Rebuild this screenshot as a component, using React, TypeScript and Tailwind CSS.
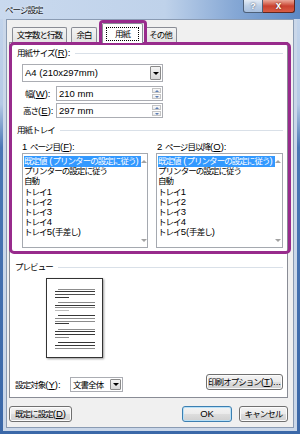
import React from 'react';

// CJK runs get the smaller, tighter size; latin stays at the base size
const CJK = /([\u3000-\u30ff\u4e00-\u9fff\uff00-\uffef]+)/;

function T({ s }: { s: string }) {
    return (
        <>
            {s.split(CJK).map((p, i) =>
                i % 2 === 1 ? (
                    <span key={i} className="text-[8.5px] tracking-[-0.95px]">{p}</span>
                ) : (
                    p
                )
            )}
        </>
    );
}

function Acc({ pre, k, post = '):' }: { pre: string; k: string; post?: string }) {
    return (
        <span className="whitespace-nowrap">
            <T s={pre} />
            <span className="underline underline-offset-1">{k}</span>
            {post}
        </span>
    );
}

function Sep({ children, cls }: { children: React.ReactNode; cls: string }) {
    return (
        <div className={`flex items-center h-[10px] leading-[10px] pr-[4px] ${cls}`}>
            {children}
            <div className="flex-1 h-px bg-[#d9e0e8] ml-[5px]" />
        </div>
    );
}

function Tri({ cls }: { cls: string }) {
    return <div className={`w-0 h-0 border-x-[3px] border-x-transparent ${cls}`} />;
}

function DropBtn() {
    return (
        <div className="w-[11px] self-stretch m-px border border-[#8a8a8a] rounded-[1px] bg-gradient-to-b from-[#f4f4f4] to-[#d8d8d8] flex items-center justify-center">
            <Tri cls="border-t-[3px] border-t-black" />
        </div>
    );
}

function Spin() {
    return (
        <div className="w-[11px] flex flex-col gap-px p-px">
            <div className="flex-1 border border-[#c4c4c4] bg-gradient-to-b from-[#fbfbfb] to-[#e9e9e9] flex items-center justify-center">
                <div className="w-0 h-0 border-x-[2.5px] border-x-transparent border-b-[2.5px] border-b-[#5b7db4]" />
            </div>
            <div className="flex-1 border border-[#c4c4c4] bg-gradient-to-b from-[#fbfbfb] to-[#e9e9e9] flex items-center justify-center">
                <div className="w-0 h-0 border-x-[2.5px] border-x-transparent border-t-[2.5px] border-t-[#5b7db4]" />
            </div>
        </div>
    );
}

const trays = [
    '既定値 (プリンターの設定に従う)',
    'プリンターの設定に従う',
    '自動',
    'トレイ1',
    'トレイ2',
    'トレイ3',
    'トレイ4',
    'トレイ5(手差し)',
];

function ListBox({ cls }: { cls: string }) {
    return (
        <div className={`h-[95px] border border-[#a5a9b0] bg-white flex ${cls}`}>
            <div className="flex-1 pt-[2px] pl-px">
                {trays.map((t, i) => (
                    <div key={t} className="h-[10.2px] leading-[10.2px] whitespace-nowrap">
                        <span className={i === 0 ? 'inline-block bg-[#3399ff] text-white pr-[2px] leading-[9.6px]' : ''}>
                            <T s={t} />
                        </span>
                    </div>
                ))}
            </div>
            <div className="w-[12px] flex flex-col justify-between items-center pt-[6px] pb-[5px]">
                <Tri cls="border-b-[3px] border-b-[#a2a2a2]" />
                <Tri cls="border-t-[3px] border-t-[#a2a2a2]" />
            </div>
        </div>
    );
}

const paras = [
    ['ml-[3px] w-[37px] bg-[#8c8c8c]', 'w-[40px] bg-[#383838]', 'w-[40px] bg-[#505050]', 'w-[14px] bg-[#383838]'],
    ['ml-[3px] w-[37px] bg-[#8c8c8c]', 'w-[40px] bg-[#383838]', 'w-[40px] bg-[#8c8c8c]', 'w-[14px] bg-[#bdbdbd]'],
    ['ml-[3px] w-[37px] bg-[#383838]', 'w-[40px] bg-[#8c8c8c]', 'w-[40px] bg-[#8c8c8c]', 'w-[14px] bg-[#383838]'],
    ['ml-[3px] w-[37px] bg-[#8c8c8c]', 'w-[40px] bg-[#383838]', 'w-[40px] bg-[#383838]', 'w-[14px] bg-[#8c8c8c]'],
    ['ml-[3px] w-[37px] bg-[#383838]', 'w-[40px] bg-[#383838]', 'w-[40px] bg-[#8c8c8c]'],
];

function Btn({ children, cls, def = false }: { children: React.ReactNode; cls: string; def?: boolean }) {
    return (
        <div
            className={`h-[16px] rounded-[3px] border flex items-center justify-center leading-[14px] bg-[linear-gradient(180deg,#f3f3f3_0%,#ebebeb_48%,#dddddd_52%,#cfcfcf_100%)] ${
                def ? 'border-[#3c7fb1] shadow-[inset_0_0_0_1px_#b8e0f7]' : 'border-[#707070] shadow-[inset_0_0_0_1px_#fbfbfb]'
            } ${cls}`}
        >
            {children}
        </div>
    );
}

export default function App() {
    return (
        <div className="relative w-[300px] h-[434px] flex flex-col overflow-hidden bg-[linear-gradient(180deg,#c5d6ec_0%,#b4c9e5_24%,#4a76b4_34%,#3b68a8_100%)] font-['Liberation_Sans','Noto_Sans_CJK_JP',sans-serif] text-[9.5px] text-black">
            {/* title bar */}
            <div className="h-[19px] flex items-start bg-[linear-gradient(90deg,#c9d9ee_0%,#bfd2ea_55%,#86a8d5_78%,#5b88c4_100%)]">
                <div className="pl-[5px] pt-[4px] leading-[11px] text-[#1b1b1b] [text-shadow:0_0_3px_#fff]">
                    <T s="ページ設定" />
                </div>
                <div className="ml-auto mr-[5px] flex h-[13px]">
                    <div className="w-[20px] border border-[#4d6079] border-t-0 rounded-bl-[3px] bg-gradient-to-b from-[#e4ecf6] via-[#bccfe6] to-[#a9c0df] flex items-center justify-center text-[9px] font-bold leading-none text-white [text-shadow:0_0_2px_#2d3e55]">
                        ?
                    </div>
                    <div className="w-[32px] border border-[#5e2620] border-t-0 border-l-0 rounded-br-[3px] bg-gradient-to-b from-[#e9a99b] via-[#c9402f] to-[#d85d45] flex items-center justify-center text-[10px] font-bold leading-none text-white [text-shadow:0_0_2px_#4a140e]">
                        x
                    </div>
                </div>
            </div>

            <div className="flex-1 flex px-[3px] pb-[3px]">
                <div className="flex-1 flex px-[3px] pb-[3px] bg-[#cad7e9]">
                    <div className="flex-1 flex flex-col bg-[#f0f0f0] border border-[#8a9bb3]">
                        {/* tabs */}
                        <div className="h-[22px] flex items-end pl-[5px]">
                            <div className="w-[55px] h-[15px] border border-b-0 border-[#898c95] rounded-t-[2px] bg-gradient-to-b from-[#f4f4f4] to-[#e2e2e2] flex items-center justify-center leading-[12px]">
                                <T s="文字数と行数" />
                            </div>
                            <div className="ml-[4px] w-[26px] h-[15px] border border-b-0 border-[#898c95] rounded-t-[2px] bg-gradient-to-b from-[#f4f4f4] to-[#e2e2e2] flex items-center justify-center leading-[12px]">
                                <T s="余白" />
                            </div>
                            <div className="relative z-10 ml-[5px] w-[41px] h-[20px] -mb-px border border-b-0 border-[#898c95] rounded-t-[2px] bg-white px-[3px] pt-[3px] pb-[2px]">
                                <div className="h-full border border-dotted border-black flex items-center justify-center leading-[12px]">
                                    <T s="用紙" />
                                </div>
                            </div>
                            <div className="ml-[1px] w-[33px] h-[15px] border border-b-0 border-[#898c95] rounded-t-[2px] bg-gradient-to-b from-[#f4f4f4] to-[#e2e2e2] flex items-center justify-center leading-[12px]">
                                <T s="その他" />
                            </div>
                        </div>

                        {/* tab page */}
                        <div className="ml-[2px] w-[279px] h-[356px] bg-white border border-[#898c95] flex flex-col">
                            <Sep cls="mt-[5px] pl-[7px]">
                                <Acc pre="用紙サイズ(" k="R" />
                            </Sep>
                            <div className="mt-[6px] ml-[12px] w-[141px] h-[18px] border border-[#abadb3] bg-white flex">
                                <div className="flex-1 pl-[2px] leading-[16px]">A4 (210x297mm)</div>
                                <DropBtn />
                            </div>
                            <div className="mt-[4px] h-[15px] flex items-center">
                                <div className="w-[46px] pl-[15px] leading-[10px]">
                                    <Acc pre="幅(" k="W" />
                                </div>
                                <div className="w-[107px] h-[15px] border border-[#abadb3] bg-white flex">
                                    <div className="flex-1 pl-[2px] leading-[13px]">210 mm</div>
                                    <Spin />
                                </div>
                            </div>
                            <div className="mt-[2px] h-[15px] flex items-center">
                                <div className="w-[46px] pl-[13px] leading-[10px]">
                                    <Acc pre="高さ(" k="E" />
                                </div>
                                <div className="w-[107px] h-[15px] border border-[#abadb3] bg-white flex">
                                    <div className="flex-1 pl-[2px] leading-[13px]">297 mm</div>
                                    <Spin />
                                </div>
                            </div>

                            <Sep cls="mt-[7px] pl-[7px]">
                                <T s="用紙トレイ" />
                            </Sep>
                            <div className="mt-[7px] h-[10px] leading-[10px] flex">
                                <div className="ml-[12px] w-[135px]">
                                    <Acc pre="1 ページ目(" k="F" />
                                </div>
                                <div>
                                    <Acc pre="2 ページ目以降(" k="O" />
                                </div>
                            </div>
                            <div className="mt-[1px] flex">
                                <ListBox cls="ml-[12px] w-[126px]" />
                                <ListBox cls="ml-[8px] w-[127px]" />
                            </div>

                            <Sep cls="mt-[14px] pl-[5px]">
                                <T s="プレビュー" />
                            </Sep>
                            <div className="mt-[6px] ml-[36px] w-[57px] h-[80px] border border-[#333] bg-white shadow-[1px_1px_2px_rgba(0,0,0,0.4)] pl-[7.7px] pt-[9.7px] flex flex-col gap-[4.3px]">
                                {paras.map((p, i) => (
                                    <div key={i} className="flex flex-col gap-[1.7px]">
                                        {p.map((c, j) => (
                                            <div key={j} className={`h-px ${c}`} />
                                        ))}
                                    </div>
                                ))}
                            </div>

                            <div className="mt-[16px] h-[18px] flex">
                                <div className="w-[60px] pl-[5px] self-end h-[15px] leading-[15px]">
                                    <Acc pre="設定対象(" k="Y" />
                                </div>
                                <div className="self-end w-[53px] h-[15px] border border-[#abadb3] bg-white flex">
                                    <div className="flex-1 pl-[2px] leading-[13px]">
                                        <T s="文書全体" />
                                    </div>
                                    <DropBtn />
                                </div>
                                <Btn cls="ml-auto mr-[4px] w-[77px] self-start">
                                    <Acc pre="印刷オプション(" k="T" post=")..." />
                                </Btn>
                            </div>
                        </div>

                        {/* dialog buttons */}
                        <div className="mt-[8px] flex">
                            <Btn cls="ml-[2px] w-[63px]">
                                <Acc pre="既定に設定(" k="D" post=")" />
                            </Btn>
                            <Btn cls="ml-auto w-[50px]" def>
                                OK
                            </Btn>
                            <Btn cls="ml-[7px] mr-[5px] w-[49px]">
                                <T s="キャンセル" />
                            </Btn>
                        </div>
                    </div>
                </div>
            </div>

            {/* purple highlight annotations */}
            <div className="absolute left-[99px] top-[20px] w-[48px] h-[25px] border-[3px] border-b-0 border-[#982b8c] rounded-t-[4px]" />
            <div className="absolute left-[9px] top-[42px] w-[282px] h-[212px] border-[3px] border-[#982b8c] rounded-[5px]" />
        </div>
    );
}
